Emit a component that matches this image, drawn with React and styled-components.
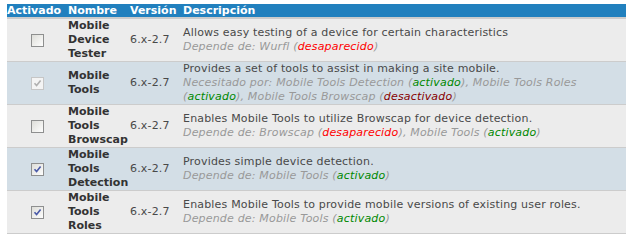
import React from "react";
import styled, { createGlobalStyle } from "styled-components";

const GlobalStyle = createGlobalStyle`
    body {
        margin: 0;
        background: #ffffff;
        font-family: "DejaVu Sans", Verdana, sans-serif;
    }
`

const Page = styled.div`
    padding: 4px 6px 0 7px;
`

const Table = styled.table`
    width: 619px;
    border-collapse: collapse;
    table-layout: fixed;
    font-size: 11px;
    line-height: 14px;
    color: #494949;
`

const Th = styled.th`
    width: ${p => p.$w ? p.$w + "px" : "auto"};
    background: #2180be;
    color: #ffffff;
    text-align: left;
    font-weight: bold;
    padding: 0;
    line-height: 13px;
    border-bottom: 2px solid #cccccc;
    white-space: nowrap;
`

const Row = styled.tr`
    background: ${p => p.$even ? "#d3dee6" : "#ececec"};
    border-bottom: 1px solid #cccccc;
`

const Cell = styled.td`
    padding: 0;
    vertical-align: middle;
    text-align: ${p => p.$center ? "center" : "left"};
    letter-spacing: 0.18px;
`

const Name = styled.td`
    padding: 0;
    vertical-align: middle;
    font-weight: bold;
    color: #333333;
`

const Requires = styled.div`
    color: #999999;
    font-style: italic;
`

const Status = styled.span`
    color: ${p => p.$kind === "missing" ? "#ff0000" : p.$kind === "off" ? "#880000" : "#008800"};
`

const BoxWrap = styled.span`
    display: inline-block;
    width: 13px;
    height: 13px;
    vertical-align: middle;
`

function Checkbox({ checked, disabled }) {
    const border = disabled ? "#c6c6c6" : "#8e8f8f";
    const mark = disabled ? "#b0b0b0" : "#4a5aa8";
    return (
        <BoxWrap>
            <svg width="13" height="13" viewBox="0 0 13 13">
                <defs>
                    <linearGradient id="cbg" x1="0" y1="0" x2="1" y2="1">
                        <stop offset="0" stopColor="#dcdcd7" />
                        <stop offset="1" stopColor="#ffffff" />
                    </linearGradient>
                </defs>
                <rect x="0.5" y="0.5" width="12" height="12" fill={disabled ? "#f4f4f4" : "url(#cbg)"} stroke={border} />
                {checked && (
                    <path d="M3.5 6.2 L5.6 8.6 L9.6 3.6" fill="none" stroke={mark} strokeWidth="1.6" />
                )}
            </svg>
        </BoxWrap>
    );
}

const modules = [
    {
        name: ["Mobile", "Device", "Tester"],
        checked: false,
        desc: "Allows easy testing of a device for certain characteristics",
        extra: <>Depende de: Wurfl (<Status $kind="missing">desaparecido</Status>)</>,
    },
    {
        name: ["Mobile", "Tools"],
        checked: true,
        disabled: true,
        desc: "Provides a set of tools to assist in making a site mobile.",
        extra: <>Necesitado por: Mobile Tools Detection (<Status>activado</Status>), Mobile Tools Roles (<Status>activado</Status>), Mobile Tools Browscap (<Status $kind="off">desactivado</Status>)</>,
    },
    {
        name: ["Mobile", "Tools", "Browscap"],
        checked: false,
        desc: "Enables Mobile Tools to utilize Browscap for device detection.",
        extra: <>Depende de: Browscap (<Status $kind="missing">desaparecido</Status>), Mobile Tools (<Status>activado</Status>)</>,
    },
    {
        name: ["Mobile", "Tools", "Detection"],
        checked: true,
        desc: "Provides simple device detection.",
        extra: <>Depende de: Mobile Tools (<Status>activado</Status>)</>,
    },
    {
        name: ["Mobile", "Tools", "Roles"],
        checked: true,
        desc: "Enables Mobile Tools to provide mobile versions of existing user roles.",
        extra: <>Depende de: Mobile Tools (<Status>activado</Status>)</>,
    },
];

export default function App() {
    return (
        <>
            <GlobalStyle />
            <Page>
                <Table>
                    <thead>
                        <tr>
                            <Th $w={61}>Activado</Th>
                            <Th $w={62}>Nombre</Th>
                            <Th $w={53}>Versión</Th>
                            <Th>Descripción</Th>
                        </tr>
                    </thead>
                    <tbody>
                        {modules.map((m, i) => (
                            <Row key={i} $even={i % 2 === 1}>
                                <Cell $center>
                                    <Checkbox checked={m.checked} disabled={m.disabled} />
                                </Cell>
                                <Name>
                                    {m.name.map((n, j) => <div key={j}>{n}</div>)}
                                </Name>
                                <Cell>6.x-2.7</Cell>
                                <Cell>
                                    <div>{m.desc}</div>
                                    <Requires>{m.extra}</Requires>
                                </Cell>
                            </Row>
                        ))}
                    </tbody>
                </Table>
            </Page>
        </>
    );
}
